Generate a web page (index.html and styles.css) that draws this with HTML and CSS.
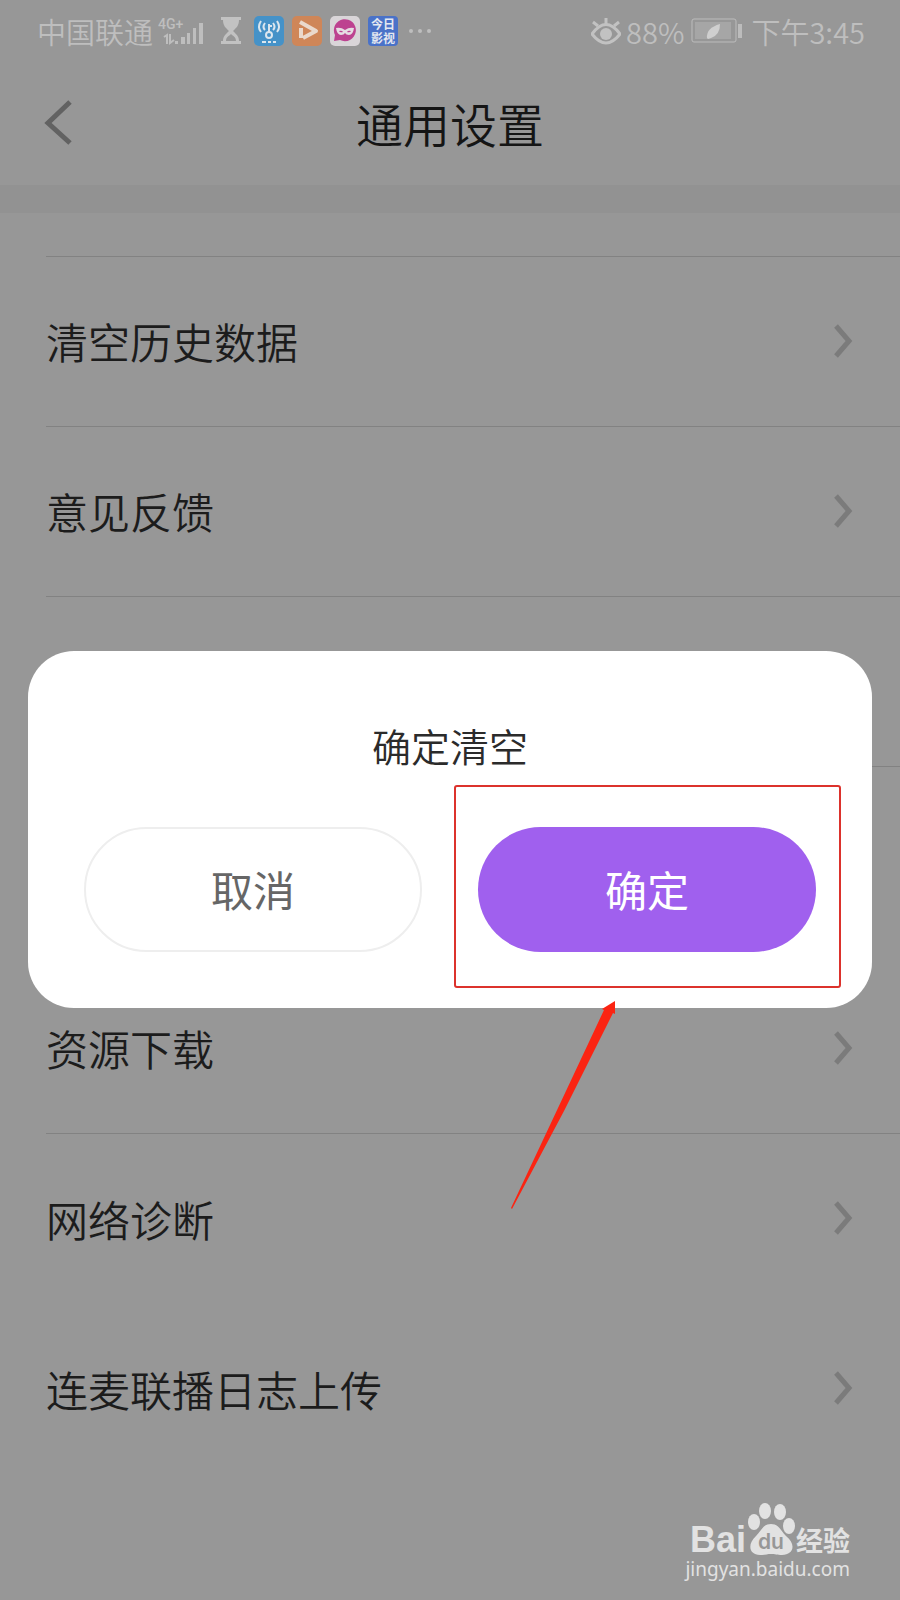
FILE: index.html
```
<!DOCTYPE html>
<html lang="zh-CN">
<head>
    <meta charset="UTF-8">
    <meta name="viewport" content="width=device-width, initial-scale=1.0">
    <title>通用设置</title>
    <link rel="stylesheet" href="styles.css">
</head>
<body>
    <div class="status-bar">
        <div class="status-left">
            <span>中国联通</span>
            <svg class="signal" width="48" height="32" viewBox="0 0 48 32">
                <text class="signal-text" x="1" y="14">4G+</text>
                <path d="M7 22l3-2v9M13 19v9l4-3" fill="none" stroke="#bebebe" stroke-width="2"/>
                <path d="M18 26h3v3h-3zM24 22h4v7h-4zM30 18h3v11h-3zM36 13h3v16h-3zM42 8h4v21h-4z" fill="#bebebe"/>
            </svg>
            <svg class="hourglass" width="20" height="28" viewBox="0 0 20 28">
                <path d="M0 0h20v3h-2c0 6-3 8-6 11 3 3 6 5 6 10h2v3H0v-3h2c0-5 3-7 6-10C5 11 2 9 2 3H0z" fill="#c2c2c2"/>
                <path d="M5 24c0-4 3-5 5-7 2 2 5 3 5 7z" fill="#979797"/>
            </svg>
            <svg class="app" width="30" height="30" viewBox="0 0 30 30">
                <rect width="30" height="30" rx="5" fill="#4592c8"/>
                <g fill="none" stroke="#dbe6ee" stroke-width="2">
                    <path d="M7 5q-4 6 0 11M11 7q-3 4 0 7M23 5q4 6 0 11M19 7q3 4 0 7M15 8v8M15 10h3"/>
                    <circle cx="15" cy="19" r="3"/>
                    <path d="M8 26h4M14 26h3M19 26h3"/>
                </g>
            </svg>
            <svg class="app" width="30" height="30" viewBox="0 0 30 30">
                <rect width="30" height="30" rx="5" fill="#cf8658"/>
                <path d="M8 6l16 9-13 7M9 12v10" fill="none" stroke="#ead9cc" stroke-width="4" stroke-linejoin="round"/>
            </svg>
            <svg class="app" width="30" height="30" viewBox="0 0 30 30">
                <rect width="30" height="30" rx="5" fill="#d9d5d8"/>
                <path d="M4 25l1-6A11 11 0 1 1 10 24z" fill="#bd4290"/>
                <path d="M6 12q5-1 9 2 4-3 9-2-1 7-5 7-3 0-4-2-1 2-4 2-4 0-5-7z" fill="#e6dce3"/>
                <path d="M9 15q3-1 4 1-3 1-4-1zM21 15q-3-1-4 1 3 1 4-1z" fill="#bd4290"/>
            </svg>
            <span class="app app-video"><span>今日</span><span>影视</span></span>
            <svg class="more" width="24" height="6" viewBox="0 0 24 6" fill="#bebebe">
                <circle cx="3" cy="3" r="2"/><circle cx="12" cy="3" r="2"/><circle cx="21" cy="3" r="2"/>
            </svg>
        </div>
        <div class="status-right">
            <svg width="30" height="28" viewBox="0 0 30 28">
                <path d="M1 17q14-19 28 0-14 18-28 0z" fill="none" stroke="#c2c2c2" stroke-width="3"/>
                <circle cx="15" cy="17" r="6" fill="#c2c2c2"/>
                <path d="M15 7V1M7 9L2 5M23 9l5-4" stroke="#c2c2c2" stroke-width="3"/>
            </svg>
            <span class="percent">88%</span>
            <svg class="battery" width="51" height="26" viewBox="0 0 51 26">
                <rect x="1" y="1" width="44" height="23" rx="2" fill="none" stroke="#bcbcbc" stroke-width="1"/>
                <rect x="4" y="4" width="36" height="17" fill="#a6a6a6"/>
                <path d="M47 6h4v14h-4z" fill="#bcbcbc"/>
                <path d="M16 20q-1-10 13-14 0 11-9 14l-3 1z" fill="#cfcfcf"/>
            </svg>
            <span>下午3:45</span>
        </div>
    </div>

    <header>
        <button class="back" aria-label="返回">
            <svg width="30" height="46" viewBox="0 0 30 46">
                <path d="M27 2L5 23l22 20" fill="none" stroke="#626262" stroke-width="5"/>
            </svg>
        </button>
        <h1>通用设置</h1>
    </header>

    <main>
        <div class="divider"></div>
        <ul class="list">
            <li class="spacer"></li>
            <li><a href="#">清空历史数据<svg class="arrow" viewBox="0 0 20 34"><path d="M3 2l13 15L3 32"/></svg></a></li>
            <li><a href="#">意见反馈<svg class="arrow" viewBox="0 0 20 34"><path d="M3 2l13 15L3 32"/></svg></a></li>
            <li></li>
        </ul>
        <ul class="list second">
            <li><a href="#">资源下载<svg class="arrow" viewBox="0 0 20 34"><path d="M3 2l13 15L3 32"/></svg></a></li>
            <li class="no-line"><a href="#">网络诊断<svg class="arrow" viewBox="0 0 20 34"><path d="M3 2l13 15L3 32"/></svg></a></li>
            <li class="no-line"><a href="#">连麦联播日志上传<svg class="arrow" viewBox="0 0 20 34"><path d="M3 2l13 15L3 32"/></svg></a></li>
        </ul>
    </main>

    <div class="dialog" role="dialog" aria-labelledby="dialog-title">
        <h2 id="dialog-title">确定清空</h2>
        <div class="buttons">
            <button class="button cancel">取消</button>
            <button class="button confirm">确定<span class="highlight"></span></button>
        </div>
        <svg class="pointer" width="106" height="210" viewBox="0 0 106 210">
            <path d="M105 0v13l-2-1L54 110 2 208l-1-1L48 107 94 9l-2-1z" fill="#fb2412"/>
        </svg>
    </div>

    <div class="watermark">
        <div class="logo">
            <span class="logo-bai">Bai</span>
            <svg class="paw" width="48" height="54" viewBox="0 0 48 54">
                <g fill="#e2e2e2">
                    <ellipse cx="7" cy="20" rx="6" ry="8"/>
                    <ellipse cx="18" cy="9" rx="6" ry="8"/>
                    <ellipse cx="33" cy="10" rx="6" ry="8"/>
                    <ellipse cx="42" cy="24" rx="6" ry="8"/>
                    <path d="M24 22c8 0 9 6 15 12 11 9 7 19-4 19-5 0-7-1-11-1s-6 1-11 1c-11 0-13-11-4-19 6-6 7-12 15-12z"/>
                </g>
                <text class="paw-text" x="24" y="47" text-anchor="middle">du</text>
            </svg>
            <span class="logo-name">经验</span>
        </div>
        <div class="site">jingyan.baidu.com</div>
    </div>
</body>
</html>
```
FILE: styles.css
```
* {
    box-sizing: border-box;
}
body {
    font-family: "Noto Sans CJK SC", sans-serif;
    font-weight: 350;
    margin: 0;
    min-height: 100vh;
    position: relative;
    background-color: #979797;
    color: #1c1c1c;
}
svg {
    display: block;
    flex: none;
}
h1, h2, ul {
    margin: 0;
    padding: 0;
    font-weight: 350;
}
button {
    font: inherit;
    padding: 0;
    border: none;
    background: none;
    cursor: pointer;
}

.status-bar {
    display: flex;
    justify-content: space-between;
    align-items: center;
    height: 62px;
    padding: 0 35px 0 37px;
    font-size: 29px;
    line-height: 32px;
    color: #bebebe;
}
.status-left, .status-right {
    display: flex;
    align-items: center;
}
.signal {
    margin-left: 4px;
}
.signal-text {
    font-family: Roboto, sans-serif;
    font-size: 14px;
    font-weight: 500;
    fill: #bebebe;
}
.hourglass {
    margin-left: 16px;
}
.app {
    margin-left: 8px;
}
.hourglass + .app {
    margin-left: 13px;
}
.app-video {
    display: flex;
    flex-direction: column;
    justify-content: center;
    align-items: center;
    width: 30px;
    height: 30px;
    border-radius: 4px;
    background: #4a72c8;
    color: #e4e8f0;
    font-size: 12px;
    font-weight: 700;
    line-height: 14px;
}
.more {
    margin-left: 10px;
}
.percent {
    margin-left: 5px;
}
.battery {
    margin: 0 9px 0 7px;
}
.status-right {
    font-family: "Noto Sans CJK SC", sans-serif;
}

header {
    display: grid;
    grid-template-columns: 1fr auto 1fr;
    align-items: center;
    height: 123px;
    padding: 0 43px 2px;
}
.back {
    justify-self: start;
}
h1 {
    font-size: 47px;
    line-height: 64px;
    color: #151515;
}

.divider {
    height: 28px;
    background: #929292;
}
.list {
    list-style: none;
    padding-left: 46px;
}
.list li {
    height: 170px;
    border-bottom: 1px solid #828282;
}
.list .spacer {
    height: 44px;
}
.list .no-line {
    border-bottom: none;
}
.list a {
    display: flex;
    justify-content: space-between;
    align-items: center;
    height: 100%;
    padding: 0 47px 2px 0;
    font-size: 42px;
    color: #1c1c1c;
    text-decoration: none;
}
.arrow {
    width: 20px;
    height: 34px;
    fill: none;
    stroke: #7b7b7b;
    stroke-width: 5;
}
.second {
    margin-top: 197px;
}

.dialog {
    position: absolute;
    top: 651px;
    left: 28px;
    right: 28px;
    padding: 66px 56px 56px;
    border-radius: 46px;
    background: #fff;
}
h2 {
    font-size: 39px;
    line-height: 56px;
    color: #2b2b2b;
    text-align: center;
}
.buttons {
    display: grid;
    grid-template-columns: 1fr 1fr;
    gap: 56px;
    margin-top: 54px;
}
.button {
    position: relative;
    height: 125px;
    border-radius: 63px;
    padding-bottom: 2px;
    font-size: 42px;
    font-weight: 400;
}
.cancel {
    border: 2px solid #eee;
    color: #666;
}
.confirm {
    background: #a060ee;
    color: #fff;
}
.highlight {
    position: absolute;
    top: -42px;
    right: -25px;
    bottom: -36px;
    left: -24px;
    border: 2px solid #dc322c;
    border-radius: 3px;
}
.pointer {
    position: absolute;
    top: 350px;
    left: 482px;
}

.watermark {
    position: absolute;
    right: 50px;
    bottom: 18px;
    color: #e2e2e2;
}
.logo {
    display: flex;
    align-items: flex-end;
    justify-content: flex-end;
}
.logo-bai {
    font-family: "Liberation Sans", sans-serif;
    font-size: 36px;
    font-weight: 700;
    line-height: 32px;
}
.paw {
    margin-left: 1px;
}
.paw-text {
    font-family: Inter, sans-serif;
    font-size: 21px;
    font-weight: 600;
    fill: #979797;
}
.logo-name {
    margin-left: 1px;
    font-size: 27px;
    font-weight: 700;
    line-height: 32px;
}
.site {
    font-family: "Noto Sans", sans-serif;
    font-size: 19px;
    font-weight: 400;
    line-height: 26px;
}
```
